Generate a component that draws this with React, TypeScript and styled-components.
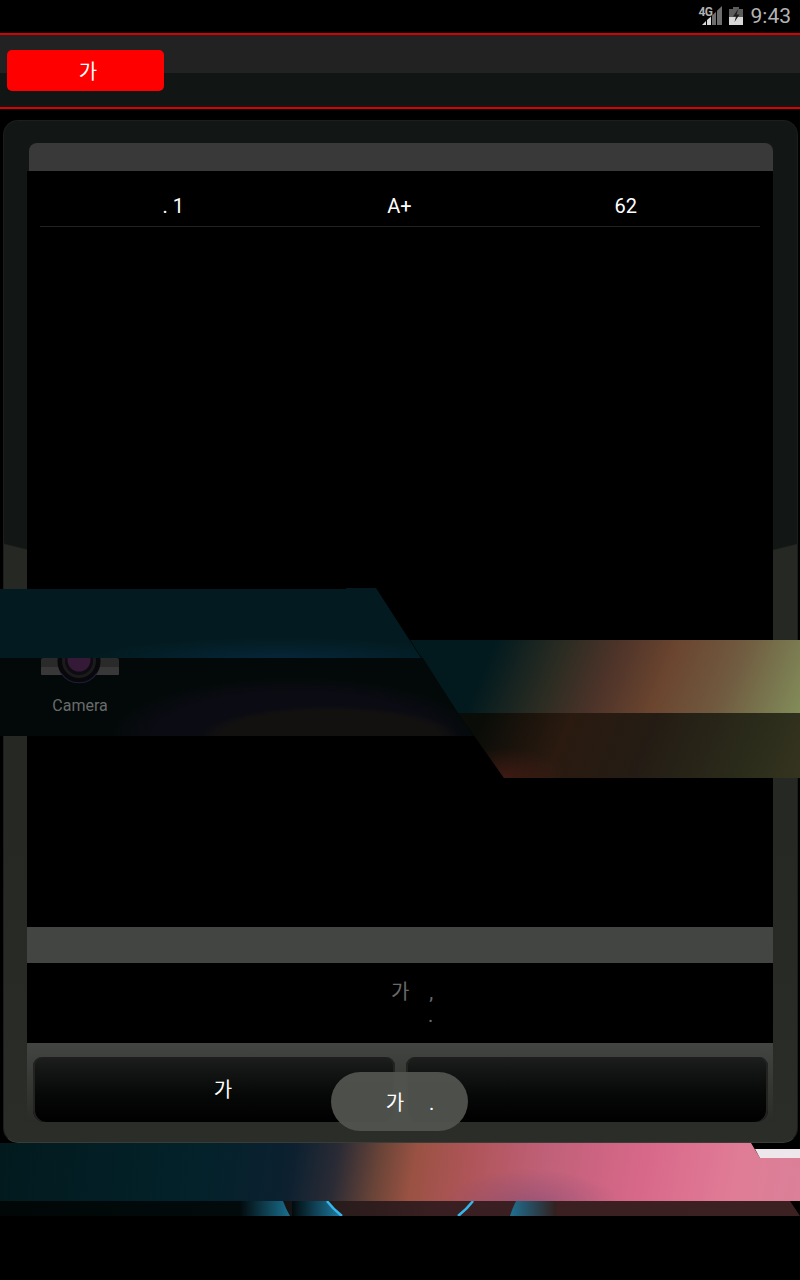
import React from 'react';
import styled, { createGlobalStyle } from 'styled-components';

const GlobalStyle = createGlobalStyle`
    html, body {
        margin: 0;
        padding: 0;
        background: #000;
    }
    * {
        box-sizing: border-box;
    }
`;

const fontStack = `Roboto, 'Noto Sans CJK KR', sans-serif`;

const Page = styled.div`
    position: relative;
    width: 800px;
    height: 1280px;
    overflow: hidden;
    background: #000;
    font-family: ${fontStack};
    color: #fff;
    display: flex;
    flex-direction: column;
`;

const StatusBar = styled.div`
    height: 33px;
    flex: none;
    display: flex;
    align-items: center;
    justify-content: flex-end;
    gap: 6px;
    padding-right: 9px;
    background: #000;
`;

const Clock = styled.span`
    font-size: 21px;
    color: #b4b4b4;
    line-height: 33px;
    margin-left: 2px;
`;

const SignalIcon = styled.div`
    position: relative;
    width: 23px;
    height: 20px;
    margin-bottom: 3px;
`;

const NetworkLabel = styled.span`
    position: absolute;
    left: -1px;
    top: 1px;
    font-size: 12px;
    font-weight: 700;
    line-height: 12px;
    letter-spacing: -0.6px;
    color: #b0b0b0;
`;

const BatteryArt = styled.svg`
    display: block;
    margin-bottom: 1px;
`;

const Header = styled.div`
    height: 76px;
    flex: none;
    padding: 15px 0 0 7px;
    border-top: 2px solid #d80000;
    border-bottom: 2px solid #d80000;
    background: linear-gradient(#222222 0, #222222 38px, #111614 38px, #111614 100%);
`;

const RedButton = styled.div`
    width: 157px;
    height: 41px;
    padding-left: 5px;
    border-radius: 5px;
    background: #ff0000;
    font-size: 20px;
    display: flex;
    align-items: center;
    justify-content: center;
`;

const DialogFrame = styled.div`
    flex: none;
    width: 795px;
    height: 1023px;
    margin: 11px 0 0 3px;
    padding: 22px 24px 0 23px;
    border-radius: 15px;
    border: 1px solid #1b1e1b;
    border-bottom-color: #3a3c38;
    background:
        radial-gradient(ellipse 900px 472px at 397px 0, #121614 99.7%, transparent 100%),
        linear-gradient(#262824 0, #262824 70%, #2b2d29 100%);
    display: flex;
    flex-direction: column;
`;

const DialogTitle = styled.div`
    height: 28px;
    flex: none;
    margin-left: 2px;
    border-radius: 8px 8px 0 0;
    background: #383938;
`;

const TableArea = styled.div`
    height: 756px;
    flex: none;
    padding: 13px 13px 0;
    background: #000;
`;

const TableRow = styled.div`
    height: 43px;
    padding: 2px 21px 0 20px;
    border-bottom: 1px solid #222;
    display: grid;
    grid-template-columns: repeat(3, 1fr);
    align-items: center;
    text-align: center;
    font-size: 20px;
`;

const FooterStrip = styled.div`
    height: 36px;
    flex: none;
    background: #434542;
`;

const Message = styled.div`
    height: 80px;
    flex: none;
    padding-top: 18px;
    background: #000;
    color: #6a6a6a;
    font-size: 20px;
    line-height: 23px;
    white-space: pre;
`;

const MessageLine = styled.div<{ $indent: number }>`
    padding-left: ${({ $indent }) => $indent}px;
`;

const ButtonBar = styled.div`
    height: 79px;
    flex: none;
    padding: 14px 5px 0 6px;
    display: grid;
    grid-template-columns: 362px 362px;
    column-gap: 11px;
    background: linear-gradient(#434542 0, #363834 50%, #2a2c28 100%);
`;

const DialogButton = styled.div`
    height: 65px;
    border-radius: 9px 9px 12px 12px;
    padding: 0 0 2px 18px;
    background: linear-gradient(#1d1e1d 0, #111412 25%, #060807 60%, #000 100%);
    box-shadow: inset 2px 0 0 #232422, inset -2px 0 0 #232422;
    display: flex;
    align-items: center;
    justify-content: center;
    font-size: 20px;
`;

const Toast = styled.div`
    position: absolute;
    left: 331px;
    top: 1072px;
    width: 137px;
    height: 59px;
    padding-left: 21px;
    border-radius: 30px;
    background: rgba(82, 84, 80, 0.94);
    font-size: 20px;
    white-space: pre;
    display: flex;
    align-items: center;
    justify-content: center;
`;

const WallpaperSlice = styled.div<{ $top: number; $height: number; $clip: string; $bg: string }>`
    position: absolute;
    left: 0;
    top: ${({ $top }) => $top}px;
    width: 800px;
    height: ${({ $height }) => $height}px;
    clip-path: ${({ $clip }) => $clip};
    background: ${({ $bg }) => $bg};
`;

const CameraLauncher = styled.div`
    position: absolute;
    left: 30px;
    top: 635px;
    width: 100px;
    height: 81px;
    display: flex;
    flex-direction: column;
    align-items: center;
    justify-content: flex-end;
`;

const CameraLabel = styled.span`
    font-size: 16px;
    line-height: 20px;
    color: #6b6b6b;
`;

const CameraArt = styled.svg`
    position: absolute;
    left: 11px;
    top: 23px;
`;

const WallpaperBottom = styled.div`
    position: relative;
    height: 73px;
    flex: none;
`;

const PinkBand = styled.div`
    height: 58px;
    clip-path: polygon(0 0, 751px 0, 760px 15px, 800px 15px, 800px 100%, 0 100%);
    background:
        radial-gradient(ellipse 90px 36px at 530px 62px, rgba(110, 70, 115, 0.45) 0, rgba(110, 70, 115, 0) 100%),
        linear-gradient(100deg, #021a1e 0, #03222a 200px, #0c2030 290px, #2a2b35 335px, #6c4538 378px, #9a5243 412px, #b0555a 470px, #c06078 540px, #d8688a 640px, #e07c96 730px, #da8098 800px);
`;

const WhiteNotch = styled.div`
    position: absolute;
    top: 6px;
    left: 754px;
    width: 46px;
    height: 9px;
    clip-path: polygon(1px 0, 100% 0, 100% 100%, 6px 100%);
    background: #ede6ea;
`;

const ArcBand = styled.svg`
    display: block;
`;

const SignalBars = () => (
    <svg width="23" height="20" viewBox="0 0 23 20">
        <path d="M2 20 L6 16 V20 Z" fill="#d8d8d8" />
        <path d="M7 20 V15 L11 11.4 V20 Z" fill="#d8d8d8" />
        <path d="M12 20 V10.5 L16 6.7 V20 Z" fill="#6e6e6e" />
        <path d="M17 20 V5.7 L22 1 V20 Z" fill="#6e6e6e" />
    </svg>
);

const BatteryIcon = () => (
    <BatteryArt width="14" height="18" viewBox="0 0 14 18">
        <path d="M4 0 H10 V2 H14 V18 H0 V2 H4 Z" fill="#5c5c5c" />
        <path d="M0 10 H14 V18 H0 Z" fill="#d8d8d8" />
        <path d="M9.5 1.5 L4 9.5 H7 L5.5 15 L10.5 7.5 H7.5 Z" fill="#1c1c1c" />
    </BatteryArt>
);

const CameraIcon = () => (
    <CameraArt width="80" height="28" viewBox="0 0 80 28">
        <rect x="0" y="0" width="78" height="17" rx="2" fill="#2a2a2a" />
        <rect x="0" y="9" width="78" height="8" rx="1" fill="#383838" />
        <circle cx="38" cy="3.5" r="21.5" fill="#08080a" />
        <circle cx="38" cy="3" r="17" fill="#1b1a1d" />
        <circle cx="38" cy="3" r="14" fill="#0e0c10" />
        <circle cx="38" cy="2" r="11.5" fill="#351a37" />
        <path d="M20 15 A21.5 21.5 0 0 0 56 15" stroke="#1e1e3c" strokeWidth="1.2" fill="none" />
    </CameraArt>
);

const App = () => (
    <Page>
        <GlobalStyle />
        <StatusBar>
            <SignalIcon>
                <SignalBars />
                <NetworkLabel>4G</NetworkLabel>
            </SignalIcon>
            <BatteryIcon />
            <Clock>9:43</Clock>
        </StatusBar>
        <Header>
            <RedButton>가</RedButton>
        </Header>
        <DialogFrame>
            <DialogTitle />
            <TableArea>
                <TableRow>
                    <span>. 1</span>
                    <span>A+</span>
                    <span>62</span>
                </TableRow>
            </TableArea>
            <FooterStrip />
            <Message>
                <MessageLine $indent={364}>{'가    ,'}</MessageLine>
                <MessageLine $indent={401}>.</MessageLine>
            </Message>
            <ButtonBar>
                <DialogButton>가</DialogButton>
                <DialogButton />
            </ButtonBar>
        </DialogFrame>
        <WallpaperBottom>
            <PinkBand />
            <WhiteNotch />
            <ArcBand width="800" height="15" viewBox="0 0 800 15">
                <defs>
                    <linearGradient id="arcGround" x1="0" x2="1" y1="0" y2="0">
                        <stop offset="0" stopColor="#010706" />
                        <stop offset="0.3" stopColor="#020a0c" />
                        <stop offset="0.43" stopColor="#2a1c1c" />
                        <stop offset="0.55" stopColor="#3a1f22" />
                        <stop offset="1" stopColor="#3c2122" />
                    </linearGradient>
                    <linearGradient id="glowLeft" x1="0" x2="1" y1="0" y2="0">
                        <stop offset="0" stopColor="#020a0c" />
                        <stop offset="1" stopColor="#1a6f8e" />
                    </linearGradient>
                    <linearGradient id="glowInner" x1="0" x2="1" y1="0" y2="0">
                        <stop offset="0" stopColor="#020a0c" />
                        <stop offset="1" stopColor="#1f7fa6" />
                    </linearGradient>
                    <linearGradient id="glowRight" x1="1" x2="0" y1="0" y2="0">
                        <stop offset="0" stopColor="#32201f" />
                        <stop offset="1" stopColor="#1f6f90" />
                    </linearGradient>
                </defs>
                <path d="M0 0 H790 L800 15 H0 Z" fill="url(#arcGround)" />
                <path d="M240 0 H283 Q286 8 290 15 H240 Z" fill="url(#glowLeft)" />
                <path d="M292 0 H327 Q333 8 342 15 H292 Z" fill="url(#glowInner)" />
                <path d="M327 0 Q333 8 342 15" stroke="#35b6ea" strokeWidth="2.5" fill="none" />
                <path d="M473 0 Q467 8 458 15" stroke="#35b6ea" strokeWidth="2.5" fill="none" />
                <path d="M516 0 H556 V15 H510 Q512 8 516 0 Z" fill="url(#glowRight)" />
            </ArcBand>
        </WallpaperBottom>
        <Toast>{'가     .'}</Toast>
        <WallpaperSlice
            $top={588}
            $height={70}
            $clip="polygon(0 1px, 346px 1px, 346px 0, 376px 0, 421px 70px, 0 70px)"
            $bg="radial-gradient(ellipse 190px 22px at 280px 72px, #06263a 0, rgba(6, 38, 58, 0) 100%), linear-gradient(#031b20, #031b20)"
        />
        <WallpaperSlice
            $top={640}
            $height={73}
            $clip="polygon(410px 0, 800px 0, 800px 73px, 458px 73px)"
            $bg="linear-gradient(112deg, #021a1e 0, #021a1e 460px, #2b2c22 525px, #4d3329 575px, #6b452f 630px, #705a40 690px, #7a7a50 740px, #8b9c62 795px)"
        />
        <WallpaperSlice
            $top={713}
            $height={65}
            $clip="polygon(458px 0, 800px 0, 800px 65px, 504px 65px)"
            $bg="radial-gradient(ellipse 60px 30px at 505px 65px, rgba(70, 28, 20, 0.8) 0, rgba(70, 28, 20, 0) 100%), linear-gradient(112deg, #0a0c08 0, #0a0c08 450px, #2a1a10 530px, #241c14 610px, #2a2a1a 700px, #33331f 760px)"
        />
        <WallpaperSlice
            $top={658}
            $height={78}
            $clip="polygon(0 0, 423px 0, 458px 55px, 474px 78px, 0 78px)"
            $bg="radial-gradient(ellipse 130px 32px at 330px 80px, #13110f 0, #13110f 85%, rgba(19, 17, 15, 0) 100%), radial-gradient(ellipse 190px 62px at 295px 80px, #0b0b13 0, #0b0b13 75%, rgba(11, 11, 19, 0) 100%), linear-gradient(#020908, #020908)"
        />
        <CameraLauncher>
            <CameraIcon />
            <CameraLabel>Camera</CameraLabel>
        </CameraLauncher>
    </Page>
);

export default App;
